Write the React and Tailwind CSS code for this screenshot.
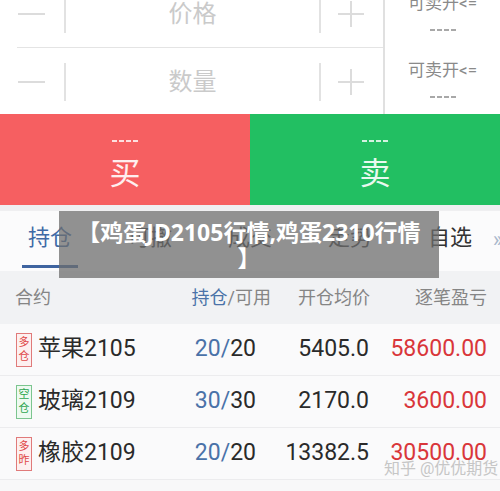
import React from 'react';

const font = "font-['Roboto','Noto_Sans_CJK_SC',sans-serif]";

const positions = [
  { tag: ['多', '仓'], tagColor: 'red', name: '苹果2105', hold: '20', avail: '20', price: '5405.0', pnl: '58600.00' },
  { tag: ['空', '仓'], tagColor: 'green', name: '玻璃2109', hold: '30', avail: '30', price: '2170.0', pnl: '3600.00' },
  { tag: ['多', '昨'], tagColor: 'red', name: '橡胶2109', hold: '20', avail: '20', price: '13382.5', pnl: '30500.00' },
];

const tabs = ['持仓', '可撤', '成交', '走势', '自选'];

// the "----" placeholder, drawn as four short strokes
const Dashes = ({ color }) => (
  <div className="flex gap-[2px]">
    {[0, 1, 2, 3].map((i) => (
      <div key={i} className={`w-[5px] h-[2px] ${color}`} />
    ))}
  </div>
);

// one input row: minus | label | plus
const InputRow = ({ label, border }) => (
  <div className={`relative h-[67px] flex items-center ml-[17px] ${border ? 'border-b border-[#e4e4e4]' : ''}`}>
    <div className="w-[27px] h-[2px] bg-[#dcdcdc] ml-[1px]" />
    <div className="w-[2px] h-[38px] bg-[#e2e2e2] ml-[19px]" />
    <div className="w-[253px] text-center text-[24px] text-[#cacaca]">{label}</div>
    <div className="w-[2px] h-[38px] bg-[#e2e2e2]" />
    <div className="relative w-[26px] h-[26px] ml-[17px]">
      <div className="absolute left-0 top-[12px] w-[26px] h-[2px] bg-[#dcdcdc]" />
      <div className="absolute left-[12px] top-0 w-[2px] h-[26px] bg-[#dcdcdc]" />
    </div>
  </div>
);

const SideCell = () => (
  <div className="h-[67px] flex flex-col items-center pt-[9px]">
    <div className="text-[17px] leading-[26px] text-[#8a8a8a]">可卖开&lt;=</div>
    <div className="mt-[13px]">
      <Dashes color="bg-[#a8a8a8]" />
    </div>
  </div>
);

export default function App() {
  return (
    <div className={`relative w-[500px] h-[491px] overflow-hidden bg-[#f8f8f9] ${font}`}>
      {/* order input */}
      <div className="h-[114px] overflow-hidden bg-white flex">
        <div className="w-[383px] -mt-[19px]">
          <InputRow label="价格" border />
          <InputRow label="数量" />
        </div>
        <div className="w-[117px] border-l-2 border-[#e0e0e0] -mt-[19px]">
          <SideCell />
          <SideCell />
        </div>
      </div>

      {/* buy / sell */}
      <div className="flex h-[91px]">
        <div className="w-[250px] bg-[#f65f61] flex flex-col items-center text-white/90">
          <div className="mt-[26px]">
            <Dashes color="bg-white/80" />
          </div>
          <div className="text-[31px] leading-[40px] mt-[12px]">买</div>
        </div>
        <div className="w-[250px] bg-[#22bf62] flex flex-col items-center text-white/90">
          <div className="mt-[26px]">
            <Dashes color="bg-white/80" />
          </div>
          <div className="text-[31px] leading-[40px] mt-[12px]">卖</div>
        </div>
      </div>
      <div className="h-[6px] bg-[#efeff1]" />

      {/* tabs */}
      <div className="h-[60px] bg-[#fbfbfc] flex items-stretch relative">
        {tabs.map((t, i) => (
          <div key={t} className="w-[100px] flex flex-col items-center">
            <div className={`text-[22px] leading-[30px] mt-[12px] ${i === 0 ? 'text-[#3f6aa6]' : 'text-[#333]'}`}>{t}</div>
            {i === 0 && <div className="mt-[12px] w-[56px] h-[3px] bg-[#3f64a0]" />}
          </div>
        ))}
        <div className="absolute right-[-3px] top-[17px] text-[22px] leading-[24px] text-[#a9b8cc]">»</div>
      </div>

      {/* header */}
      <div className="h-[53px] bg-[#f1f2f4] flex items-center text-[18px] text-[#858585]">
        <div className="w-[170px] pl-[15px]">合约</div>
        <div className="w-[101px] text-right"><span className="text-[#4a72a8]">持仓</span>/可用</div>
        <div className="w-[99px] text-right">开仓均价</div>
        <div className="w-[117px] text-right">逐笔盈亏</div>
      </div>

      {/* rows */}
      {positions.map((p) => (
        <div key={p.name} className="h-[52px] bg-[#fafafb] border-b border-[#ececee] flex items-center">
          <div className="w-[170px] flex items-center pl-[16px]">
            <div
              className={`w-[16px] h-[34px] border flex flex-col items-center justify-center text-[11px] leading-[14px] ${
                p.tagColor === 'red' ? 'border-[#e07a7a] text-[#e04848] bg-[#fdf0f0]' : 'border-[#7cc58f] text-[#2ea650] bg-[#eefaf1]'
              }`}
            >
              <span>{p.tag[0]}</span>
              <span>{p.tag[1]}</span>
            </div>
            <div className="ml-[6px] text-[23px] text-[#2a2a2a] whitespace-nowrap">{p.name}</div>
          </div>
          <div className="w-[86px] text-right text-[23px]">
            <span className="text-[#4a72a8]">{p.hold}/</span>
            <span className="text-[#2a2a2a]">{p.avail}</span>
          </div>
          <div className="w-[113px] text-right text-[23px] text-[#2a2a2a]">{p.price}</div>
          <div className="w-[118px] text-right text-[23px] text-[#d9363a]">{p.pnl}</div>
        </div>
      ))}

      {/* watermark */}
      <div className="absolute left-[384px] top-[458px] text-[16px] leading-[22px] text-[#c6c6c6] whitespace-nowrap">知乎 @优优期货</div>

      {/* title overlay */}
      <div className="absolute left-[59px] top-[211px] w-[380px] h-[67px] bg-[#6e6e6e]/75 flex items-center justify-center">
        <div className="text-center text-white font-bold text-[23px] leading-[26px] whitespace-nowrap font-['Noto_Sans','Noto_Sans_CJK_SC',sans-serif]">
          【鸡蛋JD2105行情,鸡蛋2310行情
          <br />
          】
        </div>
      </div>
    </div>
  );
}
